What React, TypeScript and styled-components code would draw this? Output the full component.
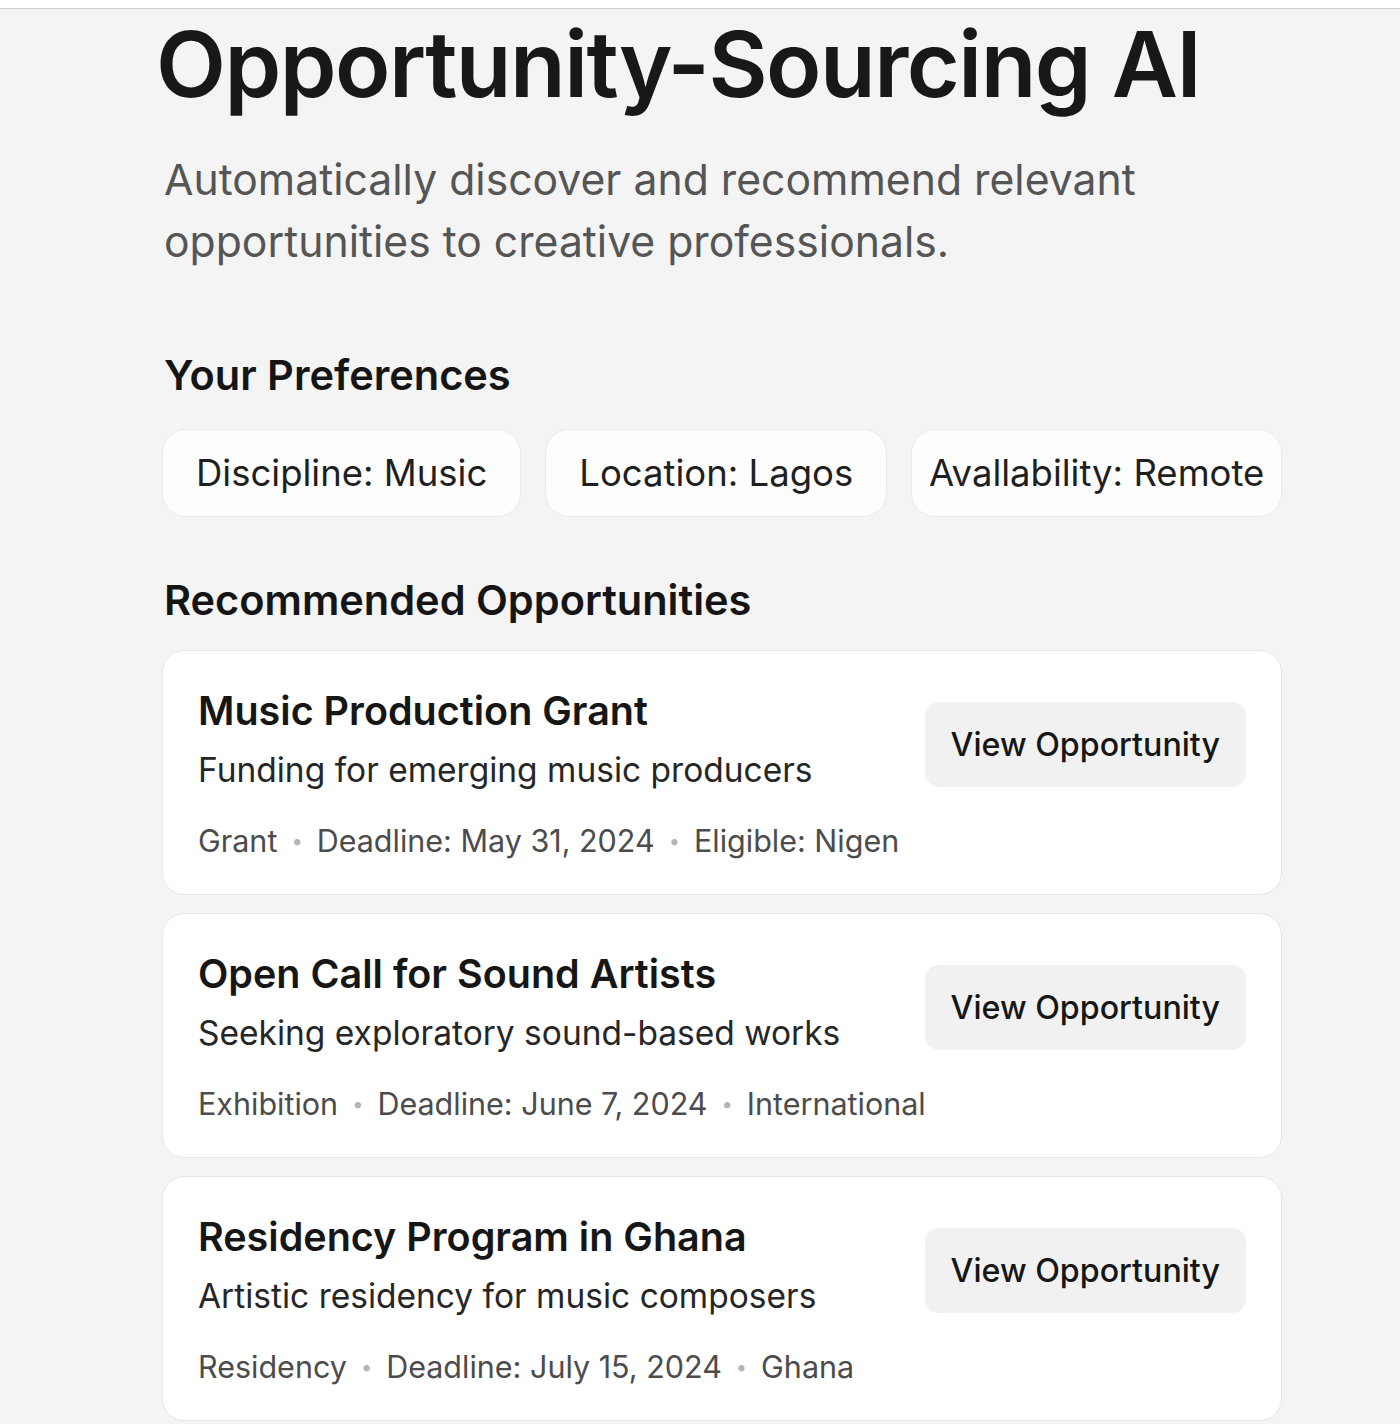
import React from "react"
import styled, { createGlobalStyle } from "styled-components"

const GlobalStyle = createGlobalStyle`
  html, body {
    margin: 0;
    padding: 0;
    background: #f4f4f4;
  }
  body {
    font-family: Inter, "Noto Sans", "Liberation Sans", sans-serif;
    color: #161616;
  }
`

type Opportunity = {
  title: string
  description: string
  meta: string[]
}

const opportunities: Opportunity[] = [
  {
    title: "Music Production Grant",
    description: "Funding for emerging music producers",
    meta: ["Grant", "Deadline: May 31, 2024", "Eligible: Nigen"],
  },
  {
    title: "Open Call for Sound Artists",
    description: "Seeking exploratory sound-based works",
    meta: ["Exhibition", "Deadline: June 7, 2024", "International"],
  },
  {
    title: "Residency Program in Ghana",
    description: "Artistic residency for music composers",
    meta: ["Residency", "Deadline: July 15, 2024", "Ghana"],
  },
]

const preferences = ["Discipline: Music", "Location: Lagos", "Avallability: Remote"]

const Page = styled.div`
  min-height: 1424px;
  border-top: 8px solid #ffffff;
  box-shadow: inset 0 1px 0 #cfcfcf;
  background: #f4f4f4;
  overflow: hidden;
`

const Content = styled.main`
  width: 1120px;
  margin-left: 162px;
  display: flex;
  flex-direction: column;
`

const Title = styled.h1`
  margin: 2px 0 0 -6px;
  font-size: 91px;
  line-height: 108px;
  font-weight: 600;
  letter-spacing: -1.5px;
  color: #181818;
`

const Subtitle = styled.p`
  margin: 31px 0 0 2px;
  font-size: 42.7px;
  line-height: 62px;
  font-weight: 400;
  color: #555555;
  max-width: 1000px;
`

const SectionTitle = styled.h2<{ $top: number }>`
  margin: ${(p) => p.$top}px 0 0 2px;
  font-size: 41.5px;
  line-height: 50px;
  font-weight: 600;
  color: #151515;
`

const ChipRow = styled.div`
  display: flex;
  gap: 24px;
  margin-top: 29px;
`

const Chip = styled.div<{ $grow?: boolean }>`
  height: 86px;
  padding: 0 ${(p) => (p.$grow ? "18px" : "33px")};
  display: flex;
  align-items: center;
  justify-content: center;
  flex: ${(p) => (p.$grow ? "1 1 0" : "0 0 auto")};
  min-width: 0;
  background: #fdfdfd;
  border: 1px solid #ebebeb;
  border-radius: 24px;
  font-size: 36.5px;
  color: #1f1f1f;
  white-space: nowrap;
`

const CardList = styled.div`
  display: flex;
  flex-direction: column;
  gap: 18px;
  margin-top: 25px;
`

const Card = styled.article`
  height: 245px;
  box-sizing: border-box;
  padding: 32px 35px 0 35px;
  background: #ffffff;
  border: 1px solid #e6e6e6;
  border-radius: 22px;
  display: flex;
  justify-content: space-between;
  align-items: flex-start;
  gap: 4px;
`

const Info = styled.div`
  flex: 1;
  min-width: 0;
  display: flex;
  flex-direction: column;
`

const CardTitle = styled.h3`
  margin: 0;
  font-size: 39.5px;
  line-height: 56px;
  font-weight: 600;
  color: #161616;
`

const Description = styled.p`
  margin: 8px 0 0;
  font-size: 33.5px;
  line-height: 46px;
  color: #262626;
`

const Meta = styled.div`
  display: flex;
  align-items: center;
  margin-top: 26px;
  font-size: 30.5px;
  line-height: 44px;
  color: #4c4c4c;
  white-space: nowrap;
`

const Dot = styled.span`
  margin: 0 14px;
  color: #b4b4b4;
  font-size: 20px;
`

const ViewButton = styled.button`
  flex-shrink: 0;
  margin-top: 19px;
  height: 85px;
  padding: 0 26px;
  border: none;
  border-radius: 14px;
  background: #f1f1f1;
  font-family: inherit;
  font-size: 32.2px;
  font-weight: 500;
  color: #161616;
  white-space: nowrap;
  cursor: pointer;
`

const OpportunityCard: React.FC<{ item: Opportunity }> = ({ item }) => (
  <Card>
    <Info>
      <CardTitle>{item.title}</CardTitle>
      <Description>{item.description}</Description>
      <Meta>
        {item.meta.map((m, i) => (
          <React.Fragment key={m}>
            {i > 0 && <Dot>•</Dot>}
            <span>{m}</span>
          </React.Fragment>
        ))}
      </Meta>
    </Info>
    <ViewButton>View Opportunity</ViewButton>
  </Card>
)

export default function App() {
  return (
    <Page>
      <GlobalStyle />
      <Content>
        <Title>Opportunity-Sourcing AI</Title>
        <Subtitle>
          Automatically discover and recommend relevant opportunities to creative professionals.
        </Subtitle>
        <SectionTitle $top={77}>Your Preferences</SectionTitle>
        <ChipRow>
          {preferences.map((p, i) => (
            <Chip key={p} $grow={i === preferences.length - 1}>
              {p}
            </Chip>
          ))}
        </ChipRow>
        <SectionTitle $top={58}>Recommended Opportunities</SectionTitle>
        <CardList>
          {opportunities.map((o) => (
            <OpportunityCard key={o.title} item={o} />
          ))}
        </CardList>
      </Content>
    </Page>
  )
}
